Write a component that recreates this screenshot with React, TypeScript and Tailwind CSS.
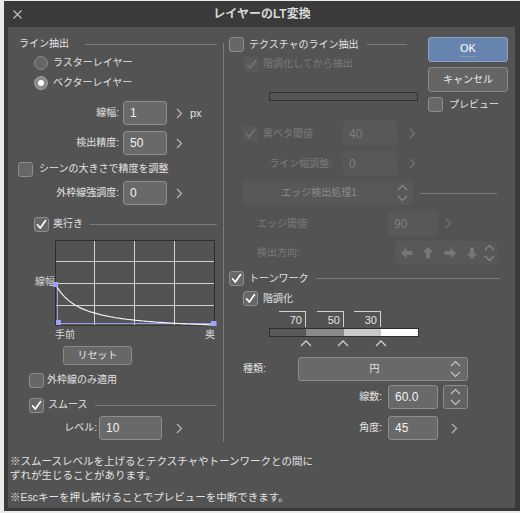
import React from "react";

// ── Small building blocks ────────────────────────────────────────────────
function Tick({ color }: { color: string }) {
  return (
    <svg width="11" height="11" viewBox="0 0 11 11">
      <polyline
        points="1.5,5.8 4.3,9 9.6,1.6"
        fill="none"
        stroke={color}
        strokeWidth="1.7"
        strokeLinecap="round"
        strokeLinejoin="round"
      />
    </svg>
  );
}

function Check({ on = false, off = false }: { on?: boolean; off?: boolean }) {
  return (
    <div
      className={
        off
          ? "size-[15px] shrink-0 rounded-[3px] bg-[#595959] flex items-center justify-center"
          : "size-[15px] shrink-0 rounded-[3px] border border-[#8d8d8d] bg-[#676767] flex items-center justify-center"
      }
    >
      {on && <Tick color={off ? "#727272" : "#ffffff"} />}
    </div>
  );
}

function Radio({ on = false }: { on?: boolean }) {
  return (
    <div
      className={
        on
          ? "size-[14px] shrink-0 rounded-full border border-[#a0a0a0] bg-[#8a8a8a] flex items-center justify-center"
          : "size-[14px] shrink-0 rounded-full border border-[#8a8a8a] bg-[#656565]"
      }
    >
      {on && <div className="size-[6px] rounded-full bg-white" />}
    </div>
  );
}

function Next({ off = false, className = "" }: { off?: boolean; className?: string }) {
  return (
    <svg width="7" height="11" viewBox="0 0 7 11" className={"shrink-0 " + className}>
      <polyline points="1,1 5.5,5.5 1,10" fill="none" stroke={off ? "#747474" : "#b8b8b8"} strokeWidth="1.2" />
    </svg>
  );
}

function UpDown({ off = false }: { off?: boolean }) {
  const c = off ? "#8a8a8a" : "#c6c6c6";
  return (
    <svg width="11" height="18" viewBox="0 0 11 18" className="shrink-0">
      <polyline points="1,6 5.5,1.5 10,6" fill="none" stroke={c} strokeWidth="1.1" />
      <polyline points="1,12 5.5,16.5 10,12" fill="none" stroke={c} strokeWidth="1.1" />
    </svg>
  );
}

function Field({ v, off = false, className = "" }: { v: string; off?: boolean; className?: string }) {
  return (
    <div
      className={
        (off
          ? "bg-[#585858] text-[#7e7e7e] "
          : "bg-[#696969] border border-[#8e8e8e] text-[#f2f2f2] ") +
        "h-[24px] shrink-0 rounded-[3px] pl-[6px] flex items-center text-[12px] " +
        className
      }
    >
      {v}
    </div>
  );
}

function Arrow({ className = "" }: { className?: string }) {
  return (
    <svg width="12" height="12" viewBox="0 0 12 12" className={"shrink-0 " + className}>
      <polygon points="0,6 5.5,0.5 5.5,4 11.5,4 11.5,8 5.5,8 5.5,11.5" fill="#767676" />
    </svg>
  );
}

function Caret({ className = "" }: { className?: string }) {
  return (
    <svg width="12" height="8" viewBox="0 0 12 8" className={"shrink-0 " + className}>
      <polyline points="1,7 6,2 11,7" fill="none" stroke="#cfcfcf" strokeWidth="1.3" />
    </svg>
  );
}

const Rule = ({ className = "" }: { className?: string }) => (
  <div className={"h-px bg-[#7a7a7a] " + className} />
);

// ── Depth curve ──────────────────────────────────────────────────────────
const curve = Array.from({ length: 90 }, (_, i) => {
  const x = 1 + (i / 89) * 158;
  const f = (x - 1) / (x - 1 + 25) / (158 / (158 + 25));
  return `${x.toFixed(1)},${(45 + 40 * f).toFixed(1)}`;
}).join(" ");

function DepthGraph() {
  return (
    <svg width="163" height="88" viewBox="0 0 163 88" className="overflow-visible">
      <g stroke="#d2d2d2" strokeWidth="1">
        <line x1="39.5" y1="1" x2="39.5" y2="85" />
        <line x1="79.5" y1="1" x2="79.5" y2="85" />
        <line x1="119.5" y1="1" x2="119.5" y2="85" />
        <line x1="1" y1="21.5" x2="159" y2="21.5" />
        <line x1="1" y1="43.5" x2="159" y2="43.5" />
        <line x1="1" y1="65.5" x2="159" y2="65.5" />
      </g>
      <polyline points="0.5,85.5 0.5,0.5 159.5,0.5 159.5,85.5" fill="none" stroke="#2f2f2f" />
      <line x1="0" y1="85.5" x2="160" y2="85.5" stroke="#3a3a3a" />
      <polyline points="2.5,44 2.5,83.5 159,83.5" fill="none" stroke="#9c9cf6" strokeWidth="1" />
      <polyline points={curve} fill="none" stroke="#f0f0f0" strokeWidth="1.2" />
      <rect x="-2" y="42" width="5" height="5" fill="#a0a0ff" />
      <rect x="1" y="80" width="5" height="5" fill="#a0a0ff" />
      <rect x="156" y="81" width="5.5" height="5" fill="#a0a0ff" />
    </svg>
  );
}

// ── Left column: line extraction ─────────────────────────────────────────
function LeftColumn() {
  return (
    <div className="w-[215px] shrink-0 flex flex-col">
      <div className="mt-[9px] h-[16px] flex items-center pl-[11px] pr-[6px]">
        <span>ライン抽出</span>
        <Rule className="ml-[16px] flex-1" />
      </div>
      <div className="mt-[1px] h-[20px] flex items-center pl-[26px] gap-[5px]">
        <Radio />
        <span>ラスターレイヤー</span>
      </div>
      <div className="h-[20px] flex items-center pl-[26px] gap-[5px]">
        <Radio on />
        <span>ベクターレイヤー</span>
      </div>

      <div className="mt-[8px] h-[24px] flex items-center">
        <span className="w-[111px] text-right">線幅:</span>
        <Field v="1" className="ml-[4px] w-[44px]" />
        <Next className="ml-[9px]" />
        <span className="ml-[7px] text-[11px]">px</span>
      </div>
      <div className="mt-[6px] h-[24px] flex items-center">
        <span className="w-[111px] text-right">検出精度:</span>
        <Field v="50" className="ml-[4px] w-[44px]" />
        <Next className="ml-[9px]" />
      </div>
      <div className="mt-[2px] h-[24px] flex items-center pl-[10px]">
        <Check />
        <span className="ml-[6px]">シーンの大きさで精度を調整</span>
      </div>
      <div className="h-[24px] flex items-center">
        <span className="w-[111px] text-right">外枠線強調度:</span>
        <Field v="0" className="ml-[4px] w-[44px]" />
        <Next className="ml-[9px]" />
      </div>

      <div className="mt-[11px] h-[16px] flex items-center pl-[26px] pr-[6px]">
        <Check on />
        <span className="ml-[4px]">奥行き</span>
        <Rule className="ml-[7px] flex-1" />
      </div>
      <div className="mt-[8px] flex">
        <span className="ml-[27px] w-[20px] pt-[37px] text-[#d8d8d8]">線幅</span>
        <DepthGraph />
      </div>
      <div className="mt-[0px] h-[14px] ml-[47px] w-[160px] flex items-center justify-between text-[#d8d8d8]">
        <span>手前</span>
        <span>奥</span>
      </div>
      <button className="mt-[4px] ml-[55px] w-[69px] h-[19px] rounded-[3px] border border-[#8a8a8a] bg-[#676767] text-[#e8e8e8] text-[10px] flex items-center justify-center">
        リセット
      </button>
      <div className="mt-[7px] h-[16px] flex items-center pl-[21px]">
        <Check />
        <span className="ml-[3px]">外枠線のみ適用</span>
      </div>
      <div className="mt-[9px] h-[16px] flex items-center pl-[21px] pr-[6px]">
        <Check on />
        <span className="ml-[4px]">スムース</span>
        <Rule className="ml-[7px] flex-1" />
      </div>
      <div className="mt-[3px] h-[24px] flex items-center">
        <span className="w-[89px] text-right">レベル:</span>
        <Field v="10" className="ml-[2px] w-[63px]" />
        <Next className="ml-[14px]" />
      </div>
    </div>
  );
}

// ── Right column: texture, edges, tone work ──────────────────────────────
function RightColumn() {
  const dim = "text-[#7b7b7b]";
  return (
    <div className="flex-1 flex flex-col">
      <div className="flex">
        <div className="w-[196px] shrink-0 flex flex-col">
          <div className="mt-[10px] h-[15px] flex items-center pl-[5px]">
            <Check />
            <span className="ml-[5px]">テクスチャのライン抽出</span>
            <Rule className="ml-[8px] w-[40px]" />
          </div>
          <div className={"mt-[4px] h-[16px] flex items-center pl-[20px] " + dim}>
            <Check on off />
            <span className="ml-[4px]">階調化してから抽出</span>
          </div>
          <div className="mt-[20px] ml-[45px] w-[149px] h-[9px] border border-[#333333]" />
          <div className="mt-[20px] h-[25px] flex items-center pl-[19px]">
            <Check on off />
            <span className={"ml-[5px] w-[80px] " + dim}>黒ベタ閾値</span>
            <Field v="40" off className="w-[54px] h-[25px]" />
            <Next off className="ml-[12px]" />
          </div>
          <div className="mt-[5px] h-[25px] flex items-center">
            <span className={"w-[108px] text-right " + dim}>ライン幅調整:</span>
            <Field v="0" off className="ml-[11px] w-[54px] h-[25px]" />
            <Next off className="ml-[12px]" />
          </div>
        </div>

        <div className="ml-[8px] w-[80px] flex flex-col">
          <button className="mt-[10px] h-[25px] rounded-[3px] border border-[#8ba3c6] bg-[#6784ae] text-white text-[11px] flex flex-col items-center justify-center">
            <span>OK</span>
            <span className="w-[16px] h-[3px] border-b border-dotted border-[#a8a8a8]" />
          </button>
          <button className="mt-[5px] h-[25px] rounded-[3px] border border-[#8a8a8a] bg-[#656565] text-[#ececec] text-[10px] flex items-center justify-center">
            キャンセル
          </button>
          <div className="mt-[5px] h-[15px] flex items-center">
            <Check />
            <span className="ml-[6px]">プレビュー</span>
          </div>
        </div>
      </div>

      <div className="mt-[5px] h-[24px] flex items-center pl-[19px]">
        <div className="w-[170px] h-[24px] rounded-[3px] bg-[#585858] text-[#8c8c8c] flex items-center">
          <span className="flex-1 text-center">エッジ検出処理1</span>
          <span className="w-[14px] mr-[4px] flex justify-center">
            <UpDown off />
          </span>
        </div>
        <Rule className="ml-[7px] w-[77px]" />
      </div>
      <div className="mt-[6px] h-[25px] flex items-center pl-[33px]">
        <span className={"w-[131px] " + dim}>エッジ閾値:</span>
        <Field v="90" off className="w-[50px] h-[25px]" />
        <Next off className="ml-[7px]" />
      </div>
      <div className="mt-[5px] h-[24px] flex items-center pl-[33px]">
        <span className={"w-[138px] " + dim}>検出方向:</span>
        <div className="w-[102px] h-[24px] rounded-[3px] bg-[#585858] flex items-center pl-[6px]">
          <Arrow />
          <Arrow className="ml-[9px] rotate-90" />
          <Arrow className="ml-[10px] rotate-180" />
          <Arrow className="ml-[10px] -rotate-90" />
          <span className="ml-[6px] flex">
            <UpDown off />
          </span>
        </div>
      </div>

      <div className="mt-[6px] h-[15px] flex items-center pl-[5px] pr-[15px]">
        <Check on />
        <span className="ml-[5px]">トーンワーク</span>
        <Rule className="ml-[7px] flex-1" />
      </div>
      <div className="mt-[5px] h-[15px] flex items-center pl-[19px]">
        <Check on />
        <span className="ml-[5px]">階調化</span>
      </div>
      <div className="mt-[5px] h-[16px] flex pl-[55px] text-[11px]">
        <div className="w-[27px] border-t border-r border-[#d0d0d0] flex items-end justify-end pr-[3px] pb-[1px]">70</div>
        <div className="ml-[11px] w-[27px] border-t border-r border-[#d0d0d0] flex items-end justify-end pr-[3px] pb-[1px]">50</div>
        <div className="ml-[10px] w-[27px] border-t border-r border-[#d0d0d0] flex items-end justify-end pr-[3px] pb-[1px]">30</div>
      </div>
      <div className="mt-[1px] ml-[45px] w-[150px] h-[9px] border border-[#2e2e2e] flex">
        <div className="w-[36px] bg-[#5a5a5a]" />
        <div className="w-[38px] bg-[#8a8a8a]" />
        <div className="w-[37px] bg-[#c9c9c9]" />
        <div className="flex-1 bg-white" />
      </div>
      <div className="mt-[1px] h-[10px] flex items-center pl-[76px]">
        <Caret />
        <Caret className="ml-[25px]" />
        <Caret className="ml-[26px]" />
      </div>

      <div className="mt-[9px] h-[24px] flex items-center pl-[19px]">
        <span className="w-[55px]">種類:</span>
        <div className="w-[170px] h-[24px] rounded-[3px] border border-[#8c8c8c] bg-[#696969] flex items-center">
          <span className="flex-1 text-center">円</span>
          <span className="mr-[6px] flex">
            <UpDown />
          </span>
        </div>
      </div>
      <div className="mt-[4px] h-[24px] flex items-center">
        <span className="w-[158px] text-right">線数:</span>
        <Field v="60.0" className="ml-[6px] w-[50px]" />
        <div className="ml-[5px] w-[25px] h-[24px] rounded-[3px] border border-[#8c8c8c] bg-[#626262] flex items-center justify-center">
          <UpDown />
        </div>
      </div>
      <div className="mt-[7px] h-[24px] flex items-center">
        <span className="w-[158px] text-right">角度:</span>
        <Field v="45" className="ml-[6px] w-[50px]" />
        <Next className="ml-[13px]" />
      </div>
    </div>
  );
}

// ── Dialog ───────────────────────────────────────────────────────────────
export default function App() {
  return (
    <div className="w-[520px] h-[513px] bg-[#ebebeb] pt-[1px] pl-[4px] font-['Liberation_Sans','Noto_Sans_CJK_JP',sans-serif] text-[10px] leading-none">
      <div className="w-[516px] h-[510px] bg-[#3a3a3a] flex flex-col">
        <div className="h-[26px] shrink-0 grid grid-cols-[1fr_auto_1fr] items-center">
          <svg width="9" height="9" viewBox="0 0 9 9" className="ml-[9px]">
            <path d="M0.5 0.5 L8.5 8.5 M8.5 0.5 L0.5 8.5" stroke="#bdbdbd" strokeWidth="1.2" />
          </svg>
          <span className="text-[12px] font-bold text-[#d8d8d8]">レイヤーのLT変換</span>
          <span />
        </div>
        <div className="flex-1 pl-[4px] pr-[5px] pb-[3px]">
          <div className="h-full bg-[#535353] text-[#e2e2e2] flex flex-col">
            <div className="flex h-[415px]">
              <LeftColumn />
              <div className="w-px shrink-0 bg-[#7a7a7a] mt-[16px] h-[399px]" />
              <RightColumn />
            </div>
            <div className="mt-[12px] pl-[2px] text-[10.5px] leading-[14px]">
              <p>※スムースレベルを上げるとテクスチャやトーンワークとの間に</p>
              <p>ずれが生じることがあります。</p>
              <p className="mt-[8px]">※Escキーを押し続けることでプレビューを中断できます。</p>
            </div>
          </div>
        </div>
      </div>
    </div>
  );
}
